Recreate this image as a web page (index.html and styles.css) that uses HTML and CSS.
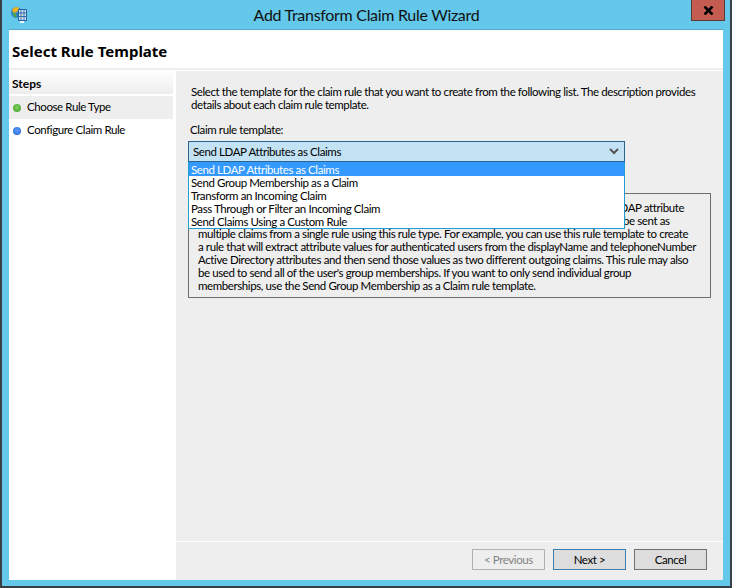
FILE: index.html
```html
<!DOCTYPE html>
<html lang="en">
<head>
<meta charset="utf-8">
<title>Add Transform Claim Rule Wizard</title>
<link rel="stylesheet" href="styles.css">
</head>
<body>
<div class="window">
  <div class="titlebar">
    <svg class="app-icon" width="17" height="18" viewBox="0 0 17 18">
      <circle cx="5.5" cy="6.5" r="5.5" fill="#2b86c8"/>
      <path d="M1 3.5 L4.5 1 L8 1.5 L8 4 L5 6.5 L2 6.5Z" fill="#f2b21c"/>
      <path d="M1.5 7 L5 7.5 L5.5 11.5 L3 10.5Z" fill="#58a83a"/>
      <rect x="7.5" y="3.5" width="8" height="11" fill="#cfe4f5" stroke="#2a62a6"/>
      <path d="M7.5 7 H15.5 M7.5 10.5 H15.5 M10 3.5 V14.5 M13 3.5 V14.5" stroke="#2a62a6" stroke-width=".9" fill="none"/>
      <rect x="9" y="15" width="4" height="2" fill="#eaf6fb"/>
    </svg>
    <div class="title">Add Transform Claim Rule Wizard</div>
    <div class="close">
      <svg width="11" height="9" viewBox="0 0 11 9"><path d="M1.5 .5 L9.5 8.5 M9.5 .5 L1.5 8.5" stroke="#000" stroke-width="2.6" fill="none"/></svg>
    </div>
  </div>
  <div class="client">
    <header class="page-head">Select Rule Template</header>
    <div class="main">
      <aside class="steps">
        <div class="steps-head">Steps</div>
        <div class="step current"><span class="dot green"></span>Choose Rule Type</div>
        <div class="step"><span class="dot blue"></span>Configure Claim Rule</div>
      </aside>
      <section class="content">
        <div class="body">
          <p class="intro">Select the template for the claim rule that you want to create from the following list. The description provides<br>details about each claim rule template.</p>
          <label class="field-label">Claim rule template:</label>
          <div class="combo-wrap">
            <div class="combo">
              <span>Send LDAP Attributes as Claims</span>
              <svg width="10" height="7" viewBox="0 0 10 7"><path d="M1 1 L5 5 L9 1" stroke="#555" stroke-width="2" fill="none"/></svg>
            </div>
            <ul class="list">
              <li class="selected">Send LDAP Attributes as Claims</li>
              <li>Send Group Membership as a Claim</li>
              <li>Transform an Incoming Claim</li>
              <li>Pass Through or Filter an Incoming Claim</li>
              <li>Send Claims Using a Custom Rule</li>
            </ul>
          </div>
          <div class="desc">Using the Send LDAP Attributes as Claims rule template you can select attributes from an LDAP attribute<br>store such as Active Directory to send as claims to the relying party. Multiple attributes may be sent as<br>multiple claims from a single rule using this rule type. For example, you can use this rule template to create<br>a rule that will extract attribute values for authenticated users from the displayName and telephoneNumber<br>Active Directory attributes and then send those values as two different outgoing claims. This rule may also<br>be used to send all of the user's group memberships. If you want to only send individual group<br>memberships, use the Send Group Membership as a Claim rule template.</div>
        </div>
        <footer class="buttons">
          <button class="btn disabled" disabled>&lt; Previous</button>
          <button class="btn default">Next &gt;</button>
          <button class="btn">Cancel</button>
        </footer>
      </section>
    </div>
  </div>
</div>
</body>
</html>
```
FILE: styles.css
```css
* { box-sizing: border-box; }
html, body { margin: 0; padding: 0; }
body {
  width: 732px;
  height: 588px;
  overflow: hidden;
  font-family: Lato, "Liberation Sans", sans-serif;
  font-size: 11.5px;
  letter-spacing: -0.4px;
  color: #000;
  background: #fff;
}
.window {
  width: 732px;
  height: 588px;
  background: #63c8e9;
  border-left: 2px solid #3a3f45;
  border-right: 2px solid #3a3f45;
  border-bottom: 2px solid #3a3f45;
  display: flex;
  flex-direction: column;
  padding: 0 7px 6px 7px;
}
.titlebar {
  height: 30px;
  flex: none;
  display: flex;
  align-items: flex-start;
  border-bottom: 1px solid #56a9c6;
}
.app-icon { margin: 6px 0 0 2px; flex: none; }
.title {
  flex: 1;
  text-align: center;
  font-size: 16px;
  letter-spacing: -0.3px;
  line-height: 30px;
  padding-left: 14px;
  color: #111;
}
.close {
  width: 34px;
  height: 21px;
  margin-right: -2px;
  background: #c45c52;
  border: 1px solid #5c3a36;
  border-top: 0;
  display: flex;
  align-items: center;
  justify-content: center;
  flex: none;
}
.client {
  flex: 1;
  min-height: 0;
  background: #fff;
  display: flex;
  flex-direction: column;
}
.page-head {
  height: 40px;
  flex: none;
  font-weight: 700;
  font-size: 15px;
  letter-spacing: 0;
  line-height: 42px;
  padding-left: 3px;
  color: #000;
  border-bottom: 2px solid #eee;
  font-family: "Noto Sans", "Open Sans", sans-serif;
}
.main {
  flex: 1;
  min-height: 0;
  display: flex;
}
.steps {
  width: 164px;
  flex: none;
  margin-top: 1px;
}
.steps-head {
  height: 23px;
  padding-left: 3px;
  font-weight: 700;
  line-height: 25px;
  font-size: 12px;
  letter-spacing: 0;
  color: #000;
  background: linear-gradient(#fff, #ededed);
  margin-bottom: 2px;
}
.step {
  height: 23px;
  display: flex;
  align-items: center;
  line-height: 21px;
  padding: 0 0 2px 4px;
}
.step.current { background: #eee; }
.dot {
  width: 8px;
  height: 8px;
  border-radius: 50%;
  margin: 2px 6px 0 0;
  flex: none;
}
.dot.green { background: radial-gradient(circle at 50% 40%, #7fd15a, #3f9e2c); }
.dot.blue { background: radial-gradient(circle at 50% 40%, #5f9cf5, #1f62d8); }
.content {
  flex: 1;
  min-width: 0;
  margin-left: 3px;
  margin-top: 1px;
  background: #eee;
  display: flex;
  flex-direction: column;
}
.body {
  flex: 1;
  min-height: 0;
  padding: 14px 12px 0 12px;
}
.intro {
  margin: 0;
  line-height: 13px;
  margin-left: 3px;
  white-space: nowrap;
}
.field-label {
  display: block;
  line-height: 13px;
  margin: 12px 0 0 2px;
}
.combo-wrap {
  position: relative;
  width: 437px;
  margin-top: 5px;
}
.combo {
  height: 21px;
  background: #c3e2f4;
  border: 1px solid #2a6592;
  display: flex;
  align-items: center;
  justify-content: space-between;
  padding: 0 5px 0 4px;
}
.list {
  position: absolute;
  left: 0;
  top: 21px;
  width: 437px;
  margin: 0;
  padding: 0;
  list-style: none;
  background: #fff;
  border: 1px solid #1f9fd0;
  border-top: 0;
  z-index: 2;
}
.list li {
  height: 13px;
  line-height: 13px;
  padding-left: 2px;
  white-space: nowrap;
}
.list li.selected {
  height: 14px;
  line-height: 15px;
  background: #3399ff;
  color: #fff;
}
.desc {
  margin-top: 31px;
  width: 523px;
  height: 105px;
  border: 1px solid #6e6e6e;
  padding: 7px 0 0 9px;
  line-height: 13px;
  white-space: nowrap;
  overflow: hidden;
}
.buttons {
  flex: none;
  height: 39px;
  border-top: 1px solid #fff;
  display: flex;
  gap: 8px;
  justify-content: flex-end;
  padding: 7px 16px 0 0;
}
.btn {
  width: 73px;
  height: 21px;
  padding: 0;
  font: inherit;
  letter-spacing: inherit;
  color: #000;
  background: #ddd;
  border: 1px solid #707070;
  border-radius: 0;
}
.btn.default { border-color: #3c7fb1; }
.btn.disabled {
  background: #eee;
  border-color: #adb2b5;
  color: #838383;
}
```
